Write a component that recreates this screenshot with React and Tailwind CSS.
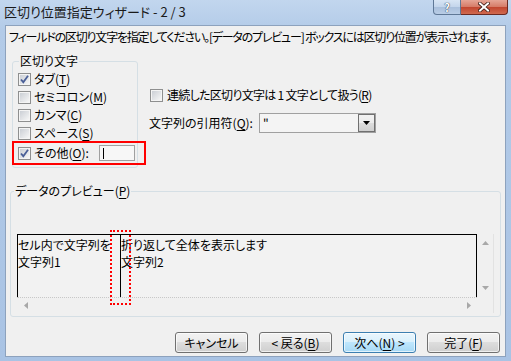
import React from "react";

function CheckBox({ checked }) {
  return (
    <span className="flex h-[13px] w-[13px] shrink-0 items-center justify-center border border-[#8e8f8f] bg-[#f4f4f4]">
      <span className="relative flex h-[11px] w-[11px] items-center justify-center border border-[#f4f4f4] bg-gradient-to-br from-[#cbcfd5] to-[#f6f6f6]">
        {checked && (
          <svg width="11" height="11" viewBox="0 0 11 11" className="absolute -left-[1px] -top-[1px]">
            <path d="M2 5.5 L4.3 8.2 L9 1.8" fill="none" stroke="#4a5f97" strokeWidth="1.8" />
          </svg>
        )}
      </span>
    </span>
  );
}

function U({ children }) {
  return <span className="underline underline-offset-[2px]">{children}</span>;
}

function Btn({ children, primary }) {
  return (
    <div
      className={
        primary
          ? "flex h-[21px] w-[73px] items-center justify-center rounded-[3px] border border-[#3c7fb1] bg-[linear-gradient(#eaf6fd,#d9f0fc_50%,#bee6fd_50%,#a7d9f5)] text-[12px] leading-[14px] shadow-[inset_0_0_0_1px_#ffffffaa]"
          : "flex h-[21px] w-[73px] items-center justify-center rounded-[3px] border border-[#707070] bg-[linear-gradient(#f2f2f2,#ebebeb_50%,#dddddd_50%,#cfcfcf)] text-[12px] leading-[14px] shadow-[inset_0_0_0_1px_#ffffffaa]"
      }
    >
      {children}
    </div>
  );
}

function Arrow({ dir }) {
  const d = {
    up: "M0 4 L3.5 0 L7 4 Z",
    down: "M0 0 L7 0 L3.5 4 Z",
    left: "M4 0 L4 7 L0 3.5 Z",
    right: "M0 0 L4 3.5 L0 7 Z",
  }[dir];
  const vertical = dir === "up" || dir === "down";
  return (
    <svg width={vertical ? 7 : 4} height={vertical ? 4 : 7} viewBox={vertical ? "0 0 7 4" : "0 0 4 7"}>
      <path d={d} fill="#a8a8a8" />
    </svg>
  );
}

export default function App() {
  return (
    <div className="relative flex h-[361px] w-[511px] flex-col overflow-hidden bg-[linear-gradient(#c2d6ee,#b3cbe8_30px,#a9c3e4)] font-['Noto_Sans_CJK_JP',sans-serif] text-[#000] [font-feature-settings:'palt']">
      {/* title bar */}
      <div className="flex h-[25px] shrink-0 items-start justify-between">
        <span className="ml-[4px] mt-[4px] text-[13px] leading-[16px] text-[#1a1a1a]">
          区切り位置指定ウィザード - 2 / 3
        </span>
        <div className="mr-[3px] flex">
          <div className="flex h-[15px] w-[28px] items-center justify-center rounded-bl-[4px] border border-t-0 border-[#5f7896] bg-[linear-gradient(#d8e5f4,#c3d5eb_50%,#a9bfdb_50%,#b9cde6)] text-[11px] font-bold leading-[12px] text-white [text-shadow:0_0_1px_#26364d,0_0_1px_#26364d]">
            ?
          </div>
          <div className="flex h-[15px] w-[47px] items-center justify-center rounded-br-[4px] border border-l-0 border-t-0 border-[#6b2a22] bg-[linear-gradient(#e6a596,#d57a66_50%,#c1442e_50%,#d06a4f)]">
            <svg width="12" height="10" viewBox="0 0 12 10">
              <path d="M2 1.5 L10 8.5 M10 1.5 L2 8.5" stroke="#3c1a14" strokeWidth="3.6" strokeLinecap="square" />
              <path d="M2 1.5 L10 8.5 M10 1.5 L2 8.5" stroke="#ffffff" strokeWidth="2" strokeLinecap="square" />
            </svg>
          </div>
        </div>
      </div>

      {/* client area */}
      <div className="mx-[5px] mb-[4px] flex flex-1 flex-col border border-[#8da2bd] bg-[#f0f0f0] text-[12px] leading-[14px]">
        <div className="whitespace-nowrap pl-[3px] pt-[4px] tracking-[-1.2px]">
          フィールドの区切り文字を指定してください。[データのプレビュー] ボックスには区切り位置が表示されます。
        </div>

        <div className="mt-[10px] flex">
          <fieldset className="ml-[6px] w-[126px] rounded-[3px] border border-[#d5dfe5] pb-[3px] pl-[5px]">
            <legend className="ml-[1px] px-[1px] text-[12px] leading-[14px]">区切り文字</legend>
            <div className="mt-[2px] flex h-[18px] items-center gap-[3px]">
              <CheckBox checked />
              <span>タブ(<U>T</U>)</span>
            </div>
            <div className="flex h-[18px] items-center gap-[3px]">
              <CheckBox />
              <span>セミコロン(<U>M</U>)</span>
            </div>
            <div className="flex h-[18px] items-center gap-[3px]">
              <CheckBox />
              <span>カンマ(<U>C</U>)</span>
            </div>
            <div className="flex h-[18px] items-center gap-[3px]">
              <CheckBox />
              <span>スペース(<U>S</U>)</span>
            </div>
            <div className="flex h-[22px] items-center gap-[3px]">
              <CheckBox checked />
              <span className="w-[62px]">その他(<U>O</U>):</span>
              <div className="flex h-[16px] w-[36px] items-center border border-[#a0a0a0] bg-[#f7f7f7] pl-[3px]">
                <span className="h-[11px] w-[1px] bg-black" />
              </div>
            </div>
          </fieldset>

          <div className="ml-[11px] mt-[32px] flex flex-col">
            <div className="flex h-[18px] items-center gap-[4px] pl-[1px]">
              <CheckBox />
              <span className="whitespace-nowrap tracking-[-0.7px]">連続した区切り文字は 1 文字として扱う(<U>R</U>)</span>
            </div>
            <div className="mt-[9px] flex h-[20px] items-center">
              <span className="w-[110px]">文字列の引用符(<U>Q</U>):</span>
              <div className="flex h-[20px] w-[117px] items-center justify-between border border-[#a0a0a0] bg-[#f4f4f4]">
                <span className="pl-[3px] text-[12px] leading-[12px] text-black">"</span>
                <div className="flex h-[18px] w-[17px] items-center justify-center border border-[#707070] bg-[linear-gradient(#f2f2f2,#ebebeb_50%,#dddddd_50%,#cfcfcf)]">
                  <svg width="7" height="4" viewBox="0 0 7 4">
                    <path d="M0 0 L7 0 L3.5 4 Z" fill="#000" />
                  </svg>
                </div>
              </div>
            </div>
          </div>
        </div>

        <fieldset className="ml-[4px] mt-[16px] h-[133px] w-[491px] rounded-[3px] border border-[#d5dfe5]">
          <legend className="ml-[3px] px-[1px] text-[12px] leading-[14px]">データのプレビュー(<U>P</U>)</legend>
          <div className="relative ml-[6px] mt-[36px] flex h-[79px] w-[477px] flex-col border-r border-[#e2e2e2]">
            <div className="flex h-[63px]">
              <div className="flex w-[460px] border-l border-r border-t border-black bg-[#f2f2f2]">
                <div className="w-[103px] border-r border-black pt-[1px] leading-[17px]">
                  <div className="whitespace-nowrap">セル内で文字列を</div>
                  <div>文字列1</div>
                </div>
                <div className="pt-[1px] leading-[17px]">
                  <div className="whitespace-nowrap">折り返して全体を表示します</div>
                  <div>文字列2</div>
                </div>
              </div>
              <div className="flex w-[16px] flex-col items-center justify-between py-[7px]">
                <Arrow dir="up" />
                <Arrow dir="down" />
              </div>
            </div>
            <div className="flex h-[16px] w-[460px] items-center justify-between border-t border-dotted border-[#c8c8c8] pl-[7px] pr-[6px]">
              <Arrow dir="left" />
              <Arrow dir="right" />
            </div>
            <div className="absolute left-[93px] top-[-4px] h-[75px] w-[21px] border-2 border-dotted border-[#ff0000]" />
          </div>
        </fieldset>

        <div className="mt-[15px] flex justify-end gap-[11px] pr-[5px]">
          <Btn>キャンセル</Btn>
          <Btn>&lt; 戻る(<U>B</U>)</Btn>
          <Btn primary>次へ(<U>N</U>) &gt;</Btn>
          <Btn>完了(<U>F</U>)</Btn>
        </div>
      </div>

      {/* annotation around その他 */}
      <div className="absolute left-[12px] top-[141px] h-[24px] w-[134px] border-2 border-[#ff0000]" />
    </div>
  );
}
